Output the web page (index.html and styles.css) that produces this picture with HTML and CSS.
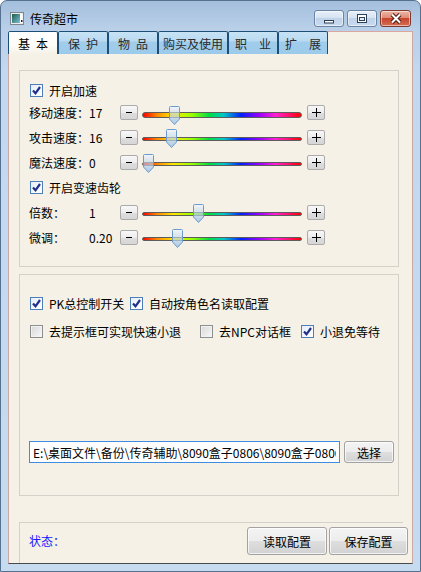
FILE: index.html
```html
<!DOCTYPE html>
<html lang="zh-CN">
<head>
  <meta charset="UTF-8">
  <title>传奇超市</title>
  <link rel="stylesheet" href="styles.css">
</head>
<body>
  <div class="window">
    <div class="titlebar">
      <svg class="app-icon" width="14" height="13" viewBox="0 0 14 13">
        <defs>
          <linearGradient id="ico" x1="0" y1="0" x2="1" y2="1">
            <stop offset="0" stop-color="#1f5c4a"/>
            <stop offset="1" stop-color="#7cc0d6"/>
          </linearGradient>
        </defs>
        <rect x="0.5" y="0.5" width="13" height="12" fill="#ececec" stroke="#7d8790"/>
        <rect x="2" y="2" width="8" height="9" fill="url(#ico)"/>
        <rect x="10" y="2" width="2.5" height="9" fill="#fff"/>
        <rect x="11" y="8" width="1.5" height="2" fill="#222"/>
      </svg>
      <span class="title">传奇超市</span>
      <div class="caption">
        <span class="cbtn">
          <svg width="12" height="12" viewBox="0 0 12 12"><rect x="1.5" y="7.5" width="9" height="2.5" fill="#fff" stroke="#2b3f58"/></svg>
        </span>
        <span class="cbtn">
          <svg width="12" height="10" viewBox="0 0 12 10"><rect x="1.5" y="0.5" width="9" height="8" fill="#fff" stroke="#2b3f58"/><rect x="3.5" y="3.5" width="5" height="3" fill="#e4edf7" stroke="#2b3f58"/></svg>
        </span>
        <span class="cbtn close">
          <svg width="14" height="11" viewBox="0 0 14 11"><path d="M3 1.5 L11 9.5 M11 1.5 L3 9.5" stroke="#4a1c14" stroke-width="4"/><path d="M3 1.5 L11 9.5 M11 1.5 L3 9.5" stroke="#fff" stroke-width="2"/></svg>
        </span>
      </div>
    </div>

    <div class="client">
      <div class="tabs">
        <div class="tab active">基&ensp;本</div>
        <div class="tab">保&ensp;护</div>
        <div class="tab">物&ensp;品</div>
        <div class="tab wide">购买及使用</div>
        <div class="tab">职&ensp;&ensp;业</div>
        <div class="tab">扩&ensp;&ensp;展</div>
        <div class="tab-fill"></div>
      </div>

      <div class="pane">
        <!-- speed settings -->
        <div class="group g1">
          <div class="crow first"><span class="cb on"><svg width="11" height="11" viewBox="0 0 11 11"><polyline points="2,5.5 4.5,8.3 9,2" fill="none" stroke="#1f2f8a" stroke-width="2.2"/></svg></span>开启加速</div>

          <div class="srow">
            <span class="lbl">移动速度：</span><span class="val">17</span>
            <span class="step"><svg width="8" height="8" viewBox="0 0 8 8"><rect x="1" y="3" width="6" height="1" fill="#000"/></svg></span>
            <div class="slider thick">
              <div class="track"></div>
              <span class="thumb" style="left:27px">
                <svg width="11" height="19" viewBox="0 0 11 19">
                  <defs>
                    <linearGradient id="thumbfill" x1="0" y1="0" x2="0" y2="1">
                      <stop offset="0" stop-color="#f4f8fd" stop-opacity="0.9"/>
                      <stop offset="0.35" stop-color="#c9dcf0" stop-opacity="0.6"/>
                      <stop offset="1" stop-color="#9fc0e3" stop-opacity="0.85"/>
                    </linearGradient>
                  </defs>
                  <path d="M1.5 .5 H9.5 A1 1 0 0 1 10.5 1.5 V13 L5.5 18.5 L.5 13 V1.5 A1 1 0 0 1 1.5 .5Z" fill="url(#thumbfill)" stroke="#6b9bcd"/>
                </svg>
              </span>
            </div>
            <span class="step"><svg width="9" height="9" viewBox="0 0 9 9"><path d="M4.5 0 V9 M0 4.5 H9" stroke="#000"/></svg></span>
          </div>

          <div class="srow">
            <span class="lbl">攻击速度：</span><span class="val">16</span>
            <span class="step"><svg width="8" height="8" viewBox="0 0 8 8"><rect x="1" y="3" width="6" height="1" fill="#000"/></svg></span>
            <div class="slider">
              <div class="track"></div>
              <span class="thumb" style="left:24px"><svg width="11" height="19" viewBox="0 0 11 19"><path d="M1.5 .5 H9.5 A1 1 0 0 1 10.5 1.5 V13 L5.5 18.5 L.5 13 V1.5 A1 1 0 0 1 1.5 .5Z" fill="url(#thumbfill)" stroke="#6b9bcd"/></svg></span>
            </div>
            <span class="step"><svg width="9" height="9" viewBox="0 0 9 9"><path d="M4.5 0 V9 M0 4.5 H9" stroke="#000"/></svg></span>
          </div>

          <div class="srow">
            <span class="lbl">魔法速度：</span><span class="val">0</span>
            <span class="step"><svg width="8" height="8" viewBox="0 0 8 8"><rect x="1" y="3" width="6" height="1" fill="#000"/></svg></span>
            <div class="slider">
              <div class="track"></div>
              <span class="thumb" style="left:1px"><svg width="11" height="19" viewBox="0 0 11 19"><path d="M1.5 .5 H9.5 A1 1 0 0 1 10.5 1.5 V13 L5.5 18.5 L.5 13 V1.5 A1 1 0 0 1 1.5 .5Z" fill="url(#thumbfill)" stroke="#6b9bcd"/></svg></span>
            </div>
            <span class="step"><svg width="9" height="9" viewBox="0 0 9 9"><path d="M4.5 0 V9 M0 4.5 H9" stroke="#000"/></svg></span>
          </div>

          <div class="crow"><span class="cb on"><svg width="11" height="11" viewBox="0 0 11 11"><polyline points="2,5.5 4.5,8.3 9,2" fill="none" stroke="#1f2f8a" stroke-width="2.2"/></svg></span>开启变速齿轮</div>

          <div class="srow">
            <span class="lbl">倍数：</span><span class="val">1</span>
            <span class="step"><svg width="8" height="8" viewBox="0 0 8 8"><rect x="1" y="3" width="6" height="1" fill="#000"/></svg></span>
            <div class="slider">
              <div class="track"></div>
              <span class="thumb" style="left:51px"><svg width="11" height="19" viewBox="0 0 11 19"><path d="M1.5 .5 H9.5 A1 1 0 0 1 10.5 1.5 V13 L5.5 18.5 L.5 13 V1.5 A1 1 0 0 1 1.5 .5Z" fill="url(#thumbfill)" stroke="#6b9bcd"/></svg></span>
            </div>
            <span class="step"><svg width="9" height="9" viewBox="0 0 9 9"><path d="M4.5 0 V9 M0 4.5 H9" stroke="#000"/></svg></span>
          </div>

          <div class="srow">
            <span class="lbl">微调：</span><span class="val">0.20</span>
            <span class="step"><svg width="8" height="8" viewBox="0 0 8 8"><rect x="1" y="3" width="6" height="1" fill="#000"/></svg></span>
            <div class="slider">
              <div class="track"></div>
              <span class="thumb" style="left:30px"><svg width="11" height="19" viewBox="0 0 11 19"><path d="M1.5 .5 H9.5 A1 1 0 0 1 10.5 1.5 V13 L5.5 18.5 L.5 13 V1.5 A1 1 0 0 1 1.5 .5Z" fill="url(#thumbfill)" stroke="#6b9bcd"/></svg></span>
            </div>
            <span class="step"><svg width="9" height="9" viewBox="0 0 9 9"><path d="M4.5 0 V9 M0 4.5 H9" stroke="#000"/></svg></span>
          </div>
        </div>

        <!-- pk options -->
        <div class="group g2">
          <div class="orow">
            <div class="opt w100"><span class="cb on"><svg width="11" height="11" viewBox="0 0 11 11"><polyline points="2,5.5 4.5,8.3 9,2" fill="none" stroke="#1f2f8a" stroke-width="2.2"/></svg></span>PK总控制开关</div>
            <div class="opt"><span class="cb on"><svg width="11" height="11" viewBox="0 0 11 11"><polyline points="2,5.5 4.5,8.3 9,2" fill="none" stroke="#1f2f8a" stroke-width="2.2"/></svg></span>自动按角色名读取配置</div>
          </div>
          <div class="orow second">
            <div class="opt w170"><span class="cb"></span>去提示框可实现快速小退</div>
            <div class="opt w101"><span class="cb"></span>去NPC对话框</div>
            <div class="opt"><span class="cb on"><svg width="11" height="11" viewBox="0 0 11 11"><polyline points="2,5.5 4.5,8.3 9,2" fill="none" stroke="#1f2f8a" stroke-width="2.2"/></svg></span>小退免等待</div>
          </div>
          <div class="path-row">
            <input class="path" type="text" readonly value="E:\桌面文件\备份\传奇辅助\8090盒子0806\8090盒子0806\传奇超市.ini">
            <button class="btn pick">选择</button>
          </div>
        </div>

        <!-- status -->
        <div class="g3">
          <span class="status">状态：</span>
          <div class="actions">
            <button class="btn big">读取配置</button>
            <button class="btn big">保存配置</button>
          </div>
        </div>
      </div>
    </div>
  </div>
</body>
</html>
```

FILE: styles.css
```css
* {
  box-sizing: border-box;
}

body {
  margin: 0;
  font-family: "Noto Sans CJK SC", "Liberation Sans", sans-serif;
  font-size: 12px;
  color: #000;
  background: #fff;
}

.window {
  width: 421px;
  height: 572px;
  border: 1px solid #56708f;
  border-radius: 7px 7px 0 0;
  background: linear-gradient(#a3bedc, #bad0e9 28px, #c3d7ee 70px, #c6daf0);
  padding: 0 7px 7px;
  display: flex;
  flex-direction: column;
  overflow: hidden;
}

/* title bar */
.titlebar {
  height: 30px;
  display: flex;
  align-items: center;
  padding: 5px 2px 0 2px;
}

.app-icon {
  flex: none;
}

.title {
  margin-left: 6px;
  font-size: 12px;
  color: #000;
}

.caption {
  margin-left: auto;
  display: flex;
}

.cbtn {
  width: 30px;
  height: 17px;
  border: 1px solid #6a84a3;
  border-radius: 3px;
  background: linear-gradient(#e8f0f9, #d5e3f2 45%, #bfd2e9 50%, #cadbef);
  display: flex;
  align-items: center;
  justify-content: center;
  box-shadow: inset 0 0 0 1px rgba(255, 255, 255, 0.5);
}

.cbtn + .cbtn {
  margin-left: 3px;
}

.cbtn.close {
  width: 31px;
  border-color: #7d3a2f;
  background: linear-gradient(#eeb5a6, #df8c77 45%, #c9452e 50%, #d46d52);
}

/* client area */
.client {
  flex: 1;
  display: flex;
  flex-direction: column;
  background: #f5f1e6;
}

.tabs {
  display: flex;
  height: 23px;
}

.tab {
  width: 50px;
  border: 1px solid #1d4e78;
  border-bottom: 0;
  border-radius: 2px 2px 0 0;
  background: linear-gradient(#c8e3f5, #b9daf1 40%, #a1cdeb 46%, #9ccaea);
  display: flex;
  align-items: center;
  justify-content: center;
  color: #2a2a2a;
  white-space: pre;
}

.tab.wide {
  width: 70px;
}

.tab.active {
  background: linear-gradient(#fff, #fdfcf9 60%, #f5f1e6);
  color: #000;
}

.tab-fill {
  flex: 1;
  border-top: 1px solid #dba6a0;
  border-right: 1px solid #c9a9a4;
}

.pane {
  flex: 1;
  border: 1px solid #c9a9a4;
  border-top: 0;
  border-bottom-color: #4a4a4a;
  padding: 16px 0 0 10px;
  display: flex;
  flex-direction: column;
}

.group {
  width: 380px;
  border: 1px solid #d4d1ca;
}

/* group 1: sliders */
.g1 {
  height: 197px;
  padding: 9px 0 0 9px;
}

.crow {
  display: flex;
  align-items: center;
  height: 25px;
  padding-left: 1px;
}

.crow.first {
  height: 20px;
}

.cb {
  width: 13px;
  height: 13px;
  flex: none;
  margin-right: 6px;
  border: 1px solid #8e8f8f;
  background: linear-gradient(135deg, #d8d8d8, #f8f8f8);
  box-shadow: inset 0 0 0 1px #f2f2f2;
  display: flex;
  align-items: center;
  justify-content: center;
}

.cb.on {
  border-color: #4d7fb6;
  background: linear-gradient(135deg, #e6eef9, #ffffff);
  box-shadow: none;
}

.srow {
  display: flex;
  align-items: center;
  height: 25px;
}

.lbl {
  width: 60px;
}

.val {
  width: 31px;
}

.step {
  width: 18px;
  height: 15px;
  flex: none;
  border: 1px solid #ababab;
  border-radius: 2px;
  background: linear-gradient(#f8f8f8, #ececec 50%, #dedede 51%, #d6d6d6);
  display: flex;
  align-items: center;
  justify-content: center;
}

.slider {
  position: relative;
  width: 160px;
  height: 20px;
  margin: 2px 5px 0 4px;
  padding-top: 8px;
}

.slider.thick {
  margin-top: 5px;
  padding-top: 7px;
}

.track {
  height: 4px;
  border: 1px solid #5d5d5d;
  border-radius: 2px;
  background: linear-gradient(to right, #f00 0%, #ff8a00 9%, #ffe600 19%, #9f0 31%, #0d4 42%, #00c8c8 51%, #0020ff 62%, #a000ff 74%, #ff20d0 84%, #ff1060 93%, #f00 100%);
}

.slider.thick .track {
  height: 6px;
  border-radius: 3px;
}

.thumb {
  position: absolute;
  top: 0;
  width: 11px;
  height: 19px;
}

.slider.thick .thumb {
  top: 1px;
}

.thumb svg {
  display: block;
}

/* group 2: options */
.g2 {
  height: 222px;
  margin-top: 7px;
  padding: 18px 0 32px 10px;
  display: flex;
  flex-direction: column;
}

.orow {
  display: flex;
  align-items: center;
  height: 20px;
}

.orow.second {
  margin-top: 8px;
}

.opt {
  display: flex;
  align-items: center;
  white-space: nowrap;
}

.w100 {
  width: 100px;
}

.w170 {
  width: 170px;
}

.w101 {
  width: 101px;
}

.path-row {
  margin-top: auto;
  display: flex;
  align-items: center;
}

.path {
  width: 311px;
  height: 22px;
  margin: 0 0 0 -1px;
  padding: 0 3px;
  border: 1px solid #3d8ee0;
  background: #fff;
  font: inherit;
  color: #000;
  outline: none;
}

.btn {
  font: inherit;
  color: #000;
  padding: 0;
  border: 1px solid #a2a2a2;
  border-radius: 3px;
  background: linear-gradient(#f4f4f4, #ececec 50%, #dedede 51%, #d2d2d2);
  box-shadow: inset 0 0 0 1px rgba(255, 255, 255, 0.7);
}

.pick {
  width: 50px;
  height: 22px;
  margin-left: 4px;
}

/* group 3: status bar */
.g3 {
  width: 384px;
  flex: 1;
  margin-top: 26px;
  border-top: 1px solid #d4d1ca;
  border-left: 1px solid #d4d1ca;
  padding: 4px 0 0 9px;
  display: flex;
  align-items: flex-start;
}

.status {
  color: #1515ff;
  height: 28px;
  line-height: 28px;
}

.actions {
  margin-left: auto;
  margin-right: -5px;
  display: flex;
  gap: 2px;
}

.big {
  width: 80px;
  height: 28px;
}

.big + .big {
  width: 79px;
}
```
